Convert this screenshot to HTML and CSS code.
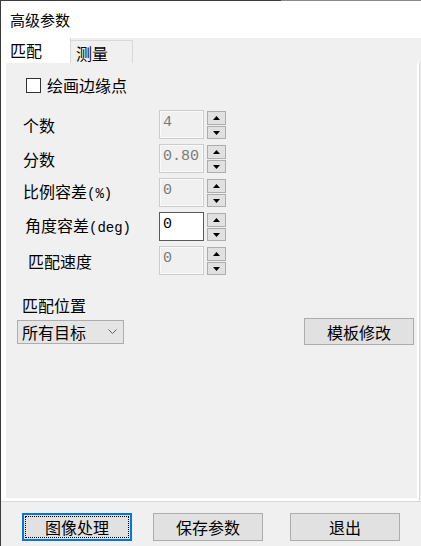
FILE: index.html
```html
<!DOCTYPE html>
<html lang="zh">
<head>
<meta charset="utf-8">
<title>高级参数</title>
<link rel="stylesheet" href="styles.css">
</head>
<body>
<div class="win">
  <div class="titlebar">高级参数</div>
  <div class="tabs">
    <div class="tab active">匹配</div>
    <div class="tab">测量</div>
  </div>
  <div class="tabctl">
    <div class="page">
      <label class="check"><span class="cbox"></span><span>绘画边缘点</span></label>
      <div class="fields">
        <div class="row">
          <span class="lbl">个数</span>
          <div class="edit dis">4</div>
          <div class="spin"><span class="sb up"><svg width="7" height="4" viewBox="0 0 7 4"><polygon points="3.5,0 7,4 0,4"/></svg></span><span class="sb dn"><svg width="7" height="4" viewBox="0 0 7 4"><polygon points="0,0 7,0 3.5,4"/></svg></span></div>
        </div>
        <div class="row">
          <span class="lbl">分数</span>
          <div class="edit dis">0.80</div>
          <div class="spin"><span class="sb up"><svg width="7" height="4" viewBox="0 0 7 4"><polygon points="3.5,0 7,4 0,4"/></svg></span><span class="sb dn"><svg width="7" height="4" viewBox="0 0 7 4"><polygon points="0,0 7,0 3.5,4"/></svg></span></div>
        </div>
        <div class="row">
          <span class="lbl">比例容差<span class="mono">(%)</span></span>
          <div class="edit dis">0</div>
          <div class="spin"><span class="sb up"><svg width="7" height="4" viewBox="0 0 7 4"><polygon points="3.5,0 7,4 0,4"/></svg></span><span class="sb dn"><svg width="7" height="4" viewBox="0 0 7 4"><polygon points="0,0 7,0 3.5,4"/></svg></span></div>
        </div>
        <div class="row">
          <span class="lbl shift2">角度容差<span class="mono">(deg)</span></span>
          <div class="edit on">0</div>
          <div class="spin"><span class="sb up"><svg width="7" height="4" viewBox="0 0 7 4"><polygon points="3.5,0 7,4 0,4"/></svg></span><span class="sb dn"><svg width="7" height="4" viewBox="0 0 7 4"><polygon points="0,0 7,0 3.5,4"/></svg></span></div>
        </div>
        <div class="row">
          <span class="lbl shift5">匹配速度</span>
          <div class="edit dis">0</div>
          <div class="spin"><span class="sb up"><svg width="7" height="4" viewBox="0 0 7 4"><polygon points="3.5,0 7,4 0,4"/></svg></span><span class="sb dn"><svg width="7" height="4" viewBox="0 0 7 4"><polygon points="0,0 7,0 3.5,4"/></svg></span></div>
        </div>
      </div>
      <div class="pos-label">匹配位置</div>
      <div class="pos-row">
        <div class="combo"><span>所有目标</span><svg class="chev" width="9" height="5" viewBox="0 0 9 5"><polyline points="0.5,0.5 4.5,4.5 8.5,0.5" fill="none" stroke="#606060" stroke-width="1"/></svg></div>
        <button class="btn">模板修改</button>
      </div>
    </div>
  </div>
  <div class="footer">
    <button class="btn focus"><span class="focus-ring">图像处理</span></button>
    <button class="btn b2">保存参数</button>
    <button class="btn b3">退出</button>
  </div>
</div>
</body>
</html>
```

FILE: styles.css
```css
* { box-sizing: border-box; }

html, body {
  margin: 0;
  padding: 0;
  background: #f0f0f0;
}

.win {
  width: 421px;
  height: 546px;
  background: #f0f0f0;
  border-left: 1px solid #6e6e6e;
  border-top: 1px solid #444;
  border-image: linear-gradient(to right, #3c3c3c 0, #3c3c3c 280px, #8a8a8a 280px, #8a8a8a 100%) 1;
  border-right: 0;
  border-bottom: 0;
  font-family: "Noto Sans CJK SC", "Noto Sans", sans-serif;
  color: #000;
  overflow: hidden;
}

.titlebar {
  height: 37px;
  background: #fff;
  padding-left: 9px;
  font-size: 15px;
  line-height: 37px;
}

.tabs {
  display: flex;
  height: 25px;
}

.tab {
  font-size: 16px;
  line-height: 22px;
}

.tab.active {
  width: 70px;
  height: 25px;
  background: #fff;
  border-right: 1px solid #d9d9d9;
  padding-left: 9px;
  padding-top: 1px;
}

.tab:not(.active) {
  width: 62px;
  height: 23px;
  margin-top: 2px;
  border-top: 1px solid #d9d9d9;
  border-right: 1px solid #d9d9d9;
  padding-left: 5px;
  padding-top: 1px;
}

.tabctl {
  height: 439px;
  width: 419px;
  background: #fff;
  border-right: 1px solid #d9d9d9;
  border-bottom: 1px solid #d9d9d9;
  padding: 0 2px 3px 5px;
}

.page {
  height: 100%;
  background: #f0f0f0;
  padding-top: 15px;
  display: flex;
  flex-direction: column;
}

.check {
  display: flex;
  align-items: center;
  height: 15px;
  margin-left: 20px;
  font-size: 16px;
  line-height: 15px;
}

.cbox {
  width: 15px;
  height: 15px;
  border: 1px solid #333;
  background: #fff;
  margin-right: 6px;
  flex: none;
}

.fields {
  margin-top: 17px;
  display: flex;
  flex-direction: column;
  gap: 5px;
  padding-left: 17px;
}

.row {
  display: flex;
  height: 29px;
  align-items: center;
}

.lbl {
  width: 136px;
  flex: none;
  font-size: 16px;
  line-height: 20px;
  white-space: nowrap;
}

.lbl.shift2 { padding-left: 2px; }
.lbl.shift5 { padding-left: 5px; }

.mono {
  font-family: "Liberation Mono", monospace;
  font-size: 14px;
}

.edit {
  width: 45px;
  height: 29px;
  flex: none;
  font-family: "Liberation Mono", monospace;
  font-size: 15px;
  line-height: 24px;
  padding-left: 3px;
  white-space: nowrap;
}

.edit.dis {
  border: 1px solid #cccccc;
  box-shadow: inset 0 0 0 1px #fafafa;
  background: #f0f0f0;
  color: #7a7a7a;
}

.edit.on {
  border: 1px solid #5a5a5a;
  background: #fff;
  color: #000;
}

.spin {
  margin-left: 3px;
  width: 19px;
  height: 28px;
  align-self: flex-start;
  margin-top: 1px;
  display: flex;
  flex-direction: column;
  gap: 1px;
}

.sb {
  display: flex;
  align-items: center;
  justify-content: center;
  border: 1px solid #adadad;
  background: #e1e1e1;
}

.sb svg { display: block; fill: #000; }

.sb.up { height: 14px; }
.sb.dn { height: 13px; }

.pos-label {
  margin-top: 20px;
  padding-left: 16px;
  font-size: 16px;
  line-height: 20px;
}

.pos-row {
  margin-top: 3px;
  height: 27px;
  display: flex;
  align-items: center;
  justify-content: space-between;
  padding-left: 11px;
  padding-right: 3px;
}

.combo {
  width: 107px;
  height: 24px;
  border: 1px solid #adadad;
  background: #e5e5e5;
  display: flex;
  align-items: center;
  padding-left: 4px;
  font-size: 16px;
  line-height: 20px;
}

.chev {
  margin-left: 22px;
  display: block;
}

.btn {
  font-family: "Noto Sans CJK SC", "Noto Sans", sans-serif;
  font-size: 16px;
  line-height: 20px;
  width: 110px;
  height: 27px;
  border: 1px solid #adadad;
  background: #e1e1e1;
  color: #000;
  padding: 0;
  display: flex;
  align-items: center;
  justify-content: center;
}

.footer {
  display: flex;
  padding-left: 21px;
  padding-top: 11px;
}

.footer .btn {
  height: 28px;
}

.btn.focus {
  border: 2px solid #0078d7;
  padding: 1px;
}

.focus-ring {
  width: 100%;
  height: 100%;
  border: 1px dotted #000;
  display: flex;
  align-items: center;
  justify-content: center;
}

.btn.b2 { margin-left: 21px; }
.btn.b3 { margin-left: 27px; }
```
